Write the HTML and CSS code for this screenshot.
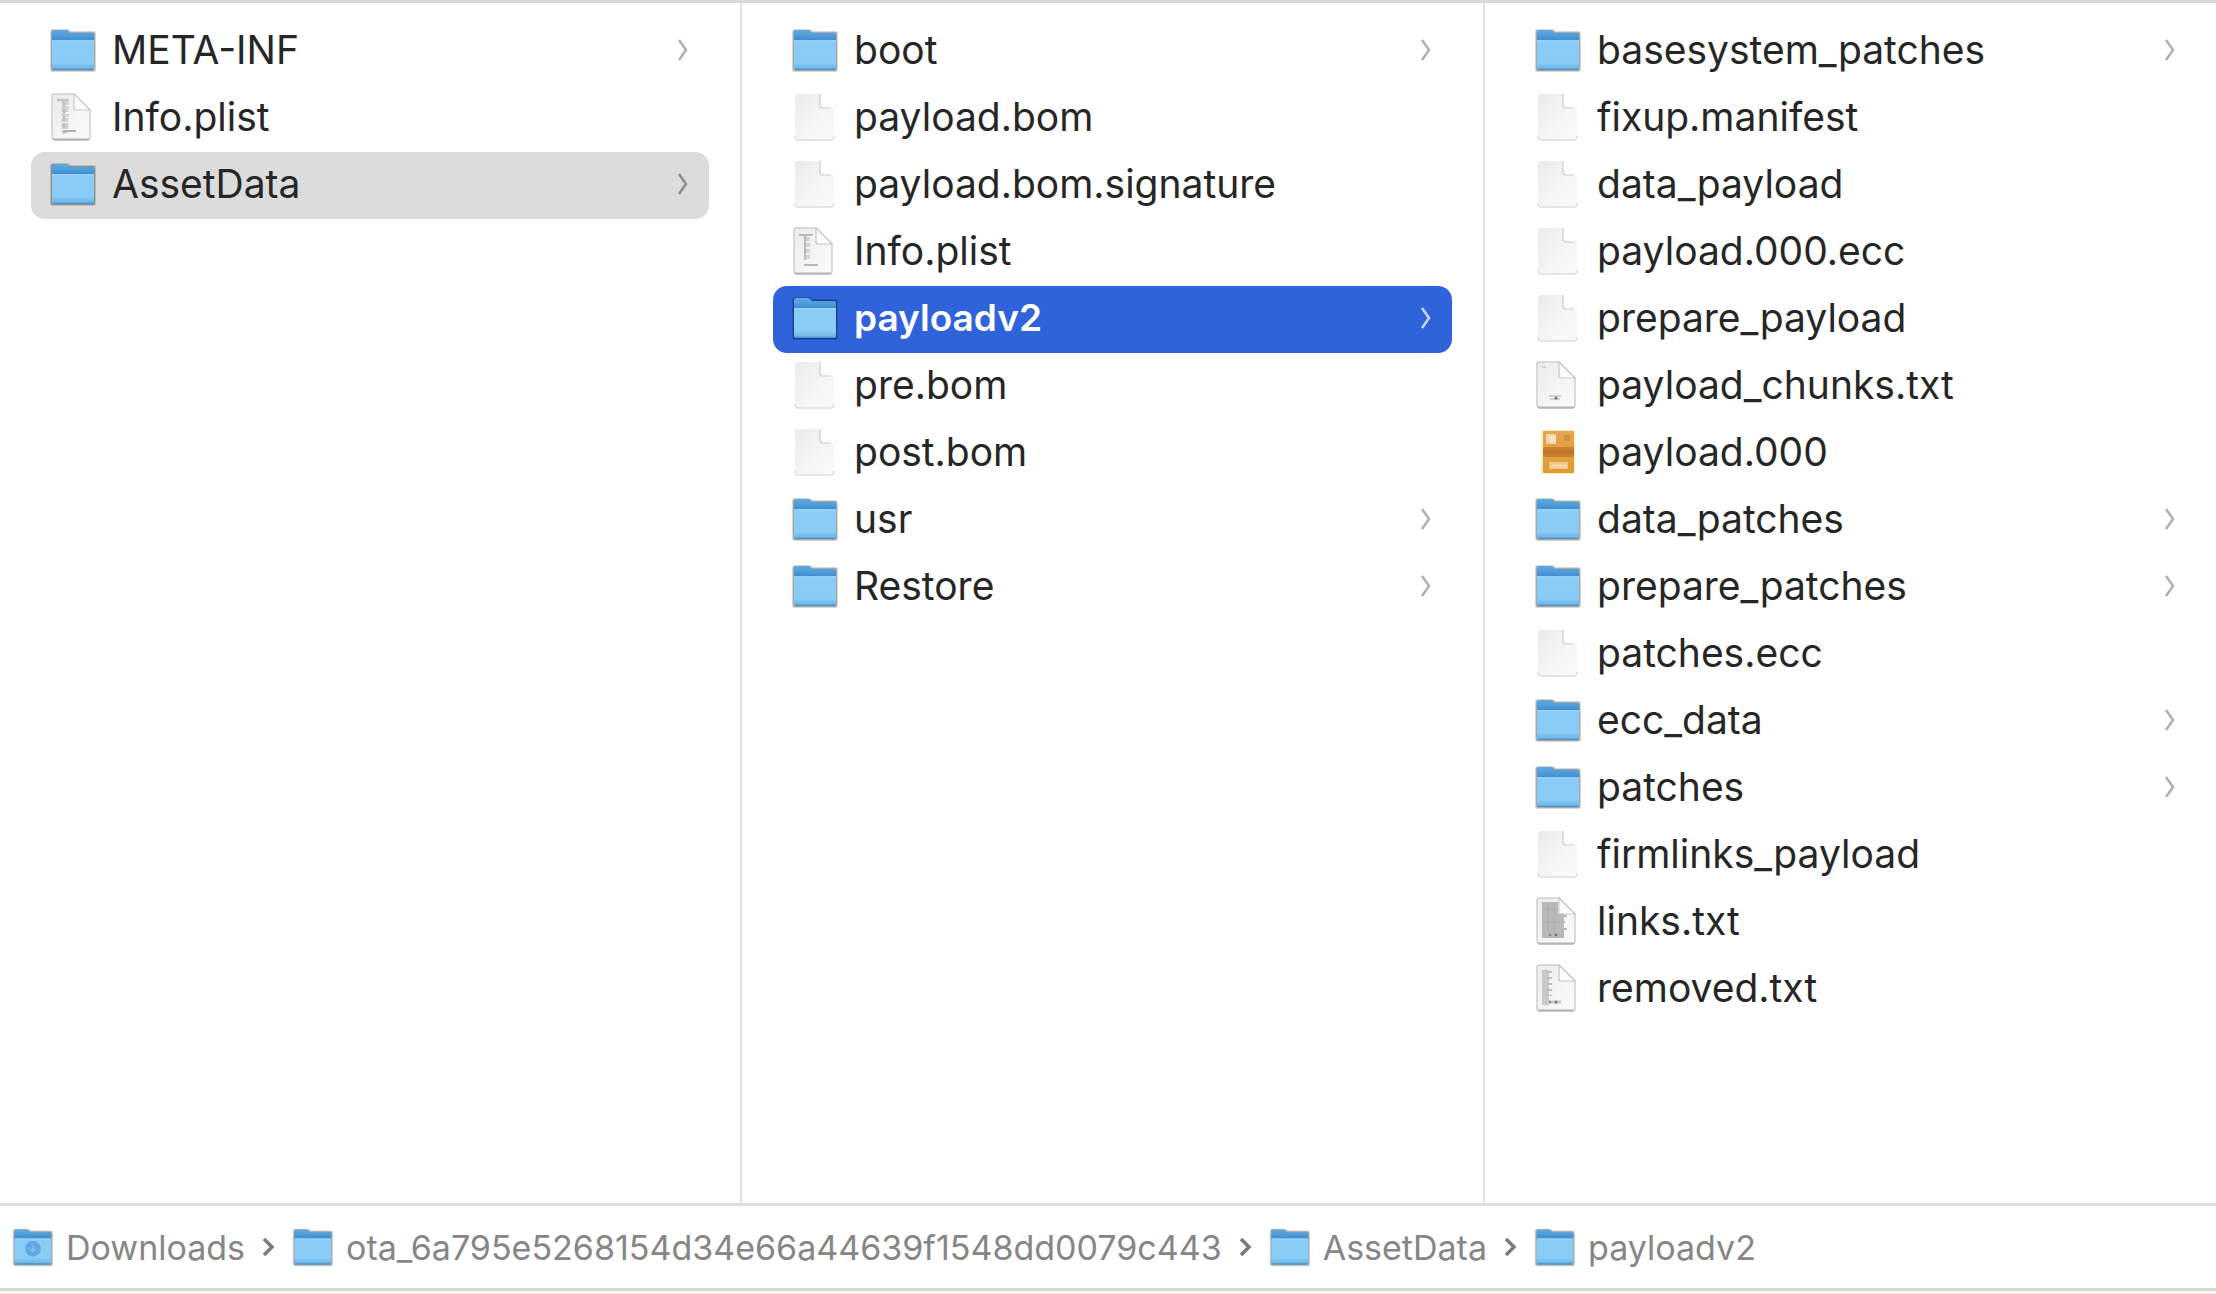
FILE: index.html
```html
<!DOCTYPE html>
<html lang="en">
<head>
<meta charset="utf-8">
<title>payloadv2</title>
<link rel="stylesheet" href="styles.css">
</head>
<body>
<svg class="sprite" aria-hidden="true">
  <defs>
    <linearGradient id="front" x1="0" y1="0" x2="0" y2="1">
      <stop offset="0" stop-color="#96d4f8"/><stop offset=".12" stop-color="#88cbf5"/><stop offset=".75" stop-color="#8accf6"/><stop offset="1" stop-color="#63b0e2"/>
    </linearGradient>
    <linearGradient id="back" x1="0" y1="0" x2="0" y2="1">
      <stop offset="0" stop-color="#5eaade"/><stop offset=".5" stop-color="#4c9ad8"/><stop offset="1" stop-color="#3a80cc"/>
    </linearGradient>
    <linearGradient id="sheet" x1="0" y1="0" x2="1" y2="1">
      <stop offset="0" stop-color="#ebebeb"/><stop offset=".6" stop-color="#f6f6f6"/><stop offset="1" stop-color="#fafafa"/>
    </linearGradient>
    <linearGradient id="box" x1="0" y1="0" x2="0" y2="1">
      <stop offset="0" stop-color="#e6a54f"/><stop offset="1" stop-color="#e19a35"/>
    </linearGradient>
    <symbol id="folder" viewBox="-1 1 48 48">
      <path d="M1 7Q1 4 4 4H18Q20 4 22 6H44Q47 6 47 9V44Q47 47 44 47H4Q1 47 1 44Z" fill="#000" opacity=".16"/>
      <path d="M2 7Q2 5 4 5H17Q19 5 21 7H44Q46 7 46 9V44Q46 46 44 46H4Q2 46 2 44Z" fill="#000" opacity=".22"/>
      <path d="M3 7Q3 5 5 5H17Q19 5 21 8H43Q45 8 45 10V18H3Z" fill="url(#back)"/>
      <path d="M3 15H45V43Q45 45 43 45H5Q3 45 3 43Z" fill="url(#front)"/>
      <path d="M4 44.300H44" stroke="#4a92c8" stroke-width="1.200"/>
    </symbol>
    <symbol id="downloads" viewBox="0 0 48 48">
      <use href="#folder" width="48" height="48"/>
      <circle cx="25" cy="26" r="9" fill="#5fa9e0"/>
      <path d="M25 22V29M22 26.500L25 29.500L28 26.500" fill="none" stroke="#79bdec" stroke-width="2"/>
    </symbol>
    <symbol id="doc" viewBox="0 0 48 48">
      <path d="M5 4Q5 1 8 1H30L44 15V44Q44 47 41 47H8Q5 47 5 44Z" fill="url(#sheet)"/>
      <path d="M5 43Q5 47 8 47H41Q44 47 44 43" fill="none" stroke="#dedede" stroke-width="1.500"/>
      <path d="M30 1L44 15H33Q30 15 30 12Z" fill="#fff"/>
      <path d="M30 1V12Q30 15 33 15H41" fill="none" stroke="#cbcbcb" stroke-width="1.200"/>
    </symbol>
    <symbol id="page" viewBox="0 0 48 48">
      <path d="M4 3Q4 1 6 1H26L42 17V44Q42 47 39 47H7Q4 47 4 44Z" fill="url(#sheet)" stroke="#cfcfcf" stroke-width="1.500"/>
      <path d="M5 46.500H41" stroke="#b4b4b4" stroke-width="2"/>
      <path d="M26 1L42 17H28Q26 17 26 15Z" fill="#fdfdfd" stroke="#c8c8c8" stroke-width="1.200"/>
    </symbol>
    <symbol id="plist-a" viewBox="0 0 48 48">
      <use href="#page" width="48" height="48"/>
      <path d="M9 7H21" stroke="#c4c4c4" stroke-width="2.500"/>
      <path d="M17 8V40" stroke="#d2d2d2" stroke-width="7" stroke-dasharray="4 1 6 2 3 1"/>
      <path d="M16 9V41" stroke="#bdbdbd" stroke-width="2" stroke-dasharray="5 2"/>
      <path d="M15 38H28" stroke="#b4b4b4" stroke-width="2"/>
    </symbol>
    <symbol id="plist-b" viewBox="0 0 48 48">
      <use href="#page" width="48" height="48"/>
      <path d="M9 8H23M15 8V33M14 38H28" fill="none" stroke="#bababa" stroke-width="2"/>
      <path d="M18 10V34" stroke="#d4d4d4" stroke-width="4" stroke-dasharray="4 2"/>
    </symbol>
    <symbol id="chunks" viewBox="0 0 48 48">
      <use href="#page" width="48" height="48"/>
      <path d="M9 6H13" stroke="#d4d4d4" stroke-width="2"/>
      <path d="M16 35H28M17 38H27" stroke="#d0d0d0" stroke-width="2"/>
      <circle cx="23" cy="37" r="1.500" fill="#6f6f6f"/>
    </symbol>
    <symbol id="links" viewBox="0 0 48 48">
      <use href="#page" width="48" height="48"/>
      <path d="M9 5H25V17H31V41H9Z" fill="#b9b9b9"/>
      <path d="M15 6V36M21 6V36M10 12H25M10 25H30" stroke="#adadad" stroke-width="1"/>
      <path d="M30 19H34M30 32H34M28 25H32" stroke="#bcbcbc" stroke-width="2"/>
      <circle cx="17" cy="38" r="1.200" fill="#888"/><circle cx="23" cy="38" r="1.500" fill="#777"/>
    </symbol>
    <symbol id="removed" viewBox="0 0 48 48">
      <use href="#page" width="48" height="48"/>
      <path d="M9 6H16V41H9Z" fill="#c9c9c9"/>
      <path d="M16 7V32" stroke="#c0c0c0" stroke-width="6" stroke-dasharray="2 4"/>
      <path d="M10 38H28" stroke="#cacaca" stroke-width="3"/>
      <circle cx="17" cy="38" r="1.200" fill="#888"/><circle cx="23" cy="38" r="1.500" fill="#777"/>
    </symbol>
    <symbol id="package" viewBox="0 0 48 48">
      <rect x="8" y="2" width="34" height="44" rx="2" fill="#fdf0b8"/>
      <rect x="10" y="3" width="31" height="42" rx="1" fill="url(#box)"/>
      <path d="M10 19H41V29H10Z" fill="#c9812f"/>
      <path d="M10 24H41" stroke="#be7528" stroke-width="4"/>
      <path d="M13 6H23V16H13Z" fill="#efd3a4"/><path d="M16 8H23V14H16Z" fill="#f2e4cb"/>
      <path d="M31 7H37V13H31Z" fill="#d1913f"/>
      <path d="M16 34H35V41H16Z" fill="#efc689"/>
      <path d="M18 38H34" stroke="#f4d8aa" stroke-width="3"/>
    </symbol>
    <symbol id="chevron" viewBox="0 0 12 24">
      <path d="M2 2L9 12L2 22" fill="none" stroke="currentColor" stroke-width="2.500"/>
    </symbol>
    <symbol id="step" viewBox="0 0 14 20">
      <path d="M3 2L11 10L3 18" fill="none" stroke="currentColor" stroke-width="3.500"/>
    </symbol>
  </defs>
</svg>

<main class="browser">
  <ul class="column">
    <li><a class="row" href="#"><svg class="icon"><use href="#folder"/></svg><span class="name">META-INF</span><svg class="chevron"><use href="#chevron"/></svg></a></li>
    <li><a class="row" href="#"><svg class="icon"><use href="#plist-a"/></svg><span class="name">Info.plist</span></a></li>
    <li><a class="row row-open" href="#"><svg class="icon"><use href="#folder"/></svg><span class="name">AssetData</span><svg class="chevron"><use href="#chevron"/></svg></a></li>
  </ul>
  <ul class="column">
    <li><a class="row" href="#"><svg class="icon"><use href="#folder"/></svg><span class="name">boot</span><svg class="chevron"><use href="#chevron"/></svg></a></li>
    <li><a class="row" href="#"><svg class="icon"><use href="#doc"/></svg><span class="name">payload.bom</span></a></li>
    <li><a class="row" href="#"><svg class="icon"><use href="#doc"/></svg><span class="name">payload.bom.signature</span></a></li>
    <li><a class="row" href="#"><svg class="icon"><use href="#plist-b"/></svg><span class="name">Info.plist</span></a></li>
    <li><a class="row row-selected" href="#" aria-current="true"><svg class="icon"><use href="#folder"/></svg><span class="name">payloadv2</span><svg class="chevron"><use href="#chevron"/></svg></a></li>
    <li><a class="row" href="#"><svg class="icon"><use href="#doc"/></svg><span class="name">pre.bom</span></a></li>
    <li><a class="row" href="#"><svg class="icon"><use href="#doc"/></svg><span class="name">post.bom</span></a></li>
    <li><a class="row" href="#"><svg class="icon"><use href="#folder"/></svg><span class="name">usr</span><svg class="chevron"><use href="#chevron"/></svg></a></li>
    <li><a class="row" href="#"><svg class="icon"><use href="#folder"/></svg><span class="name">Restore</span><svg class="chevron"><use href="#chevron"/></svg></a></li>
  </ul>
  <ul class="column column-last">
    <li><a class="row" href="#"><svg class="icon"><use href="#folder"/></svg><span class="name">basesystem_patches</span><svg class="chevron"><use href="#chevron"/></svg></a></li>
    <li><a class="row" href="#"><svg class="icon"><use href="#doc"/></svg><span class="name">fixup.manifest</span></a></li>
    <li><a class="row" href="#"><svg class="icon"><use href="#doc"/></svg><span class="name">data_payload</span></a></li>
    <li><a class="row" href="#"><svg class="icon"><use href="#doc"/></svg><span class="name">payload.000.ecc</span></a></li>
    <li><a class="row" href="#"><svg class="icon"><use href="#doc"/></svg><span class="name">prepare_payload</span></a></li>
    <li><a class="row" href="#"><svg class="icon"><use href="#chunks"/></svg><span class="name">payload_chunks.txt</span></a></li>
    <li><a class="row" href="#"><svg class="icon"><use href="#package"/></svg><span class="name">payload.000</span></a></li>
    <li><a class="row" href="#"><svg class="icon"><use href="#folder"/></svg><span class="name">data_patches</span><svg class="chevron"><use href="#chevron"/></svg></a></li>
    <li><a class="row" href="#"><svg class="icon"><use href="#folder"/></svg><span class="name">prepare_patches</span><svg class="chevron"><use href="#chevron"/></svg></a></li>
    <li><a class="row" href="#"><svg class="icon"><use href="#doc"/></svg><span class="name">patches.ecc</span></a></li>
    <li><a class="row" href="#"><svg class="icon"><use href="#folder"/></svg><span class="name">ecc_data</span><svg class="chevron"><use href="#chevron"/></svg></a></li>
    <li><a class="row" href="#"><svg class="icon"><use href="#folder"/></svg><span class="name">patches</span><svg class="chevron"><use href="#chevron"/></svg></a></li>
    <li><a class="row" href="#"><svg class="icon"><use href="#doc"/></svg><span class="name">firmlinks_payload</span></a></li>
    <li><a class="row" href="#"><svg class="icon"><use href="#links"/></svg><span class="name">links.txt</span></a></li>
    <li><a class="row" href="#"><svg class="icon"><use href="#removed"/></svg><span class="name">removed.txt</span></a></li>
  </ul>
</main>

<nav class="path" aria-label="Path">
  <a class="crumb" href="#"><svg class="crumb-icon"><use href="#downloads"/></svg>Downloads</a>
  <svg class="step"><use href="#step"/></svg>
  <a class="crumb" href="#"><svg class="crumb-icon"><use href="#folder"/></svg>ota_6a795e5268154d34e66a44639f1548dd0079c443</a>
  <svg class="step"><use href="#step"/></svg>
  <a class="crumb" href="#"><svg class="crumb-icon"><use href="#folder"/></svg>AssetData</a>
  <svg class="step"><use href="#step"/></svg>
  <a class="crumb" href="#"><svg class="crumb-icon"><use href="#folder"/></svg>payloadv2</a>
</nav>
</body>
</html>
```
FILE: styles.css
```css
* {
  box-sizing: border-box;
}

body {
  margin: 0;
  min-height: 100vh;
  display: flex;
  flex-direction: column;
  background: #fff;
  border-top: 3px solid #d9d9d9;
  border-bottom: 3px solid #fdf8f2;
  font-family: Inter, "Liberation Sans", sans-serif;
  color: #262626;
}

a {
  color: inherit;
  text-decoration: none;
}

svg {
  display: block;
  flex: none;
}

.sprite {
  position: absolute;
  width: 0;
  height: 0;
}

.browser {
  flex: 1;
  display: grid;
  grid-template-columns: 742fr 743fr 731fr;
}

.column {
  margin: 0;
  padding: 15px 31px;
  border-right: 2px solid #e2e2e2;
  list-style: none;
}

.column-last {
  padding-right: 20px;
  border-right: 0;
}

.row {
  display: flex;
  align-items: center;
  gap: 16px;
  height: 67px;
  padding: 0 20px 4px 17px;
  border-radius: 14px;
  font-size: 39px;
}

.row-open {
  background: #dcdcdc;
}

.row-selected {
  background: #2e63da;
  color: #fff;
  font-size: 37px;
  font-weight: 600;
}

.name {
  flex: 1;
  white-space: nowrap;
}

.icon {
  width: 48px;
  height: 48px;
}

.chevron {
  width: 12px;
  height: 24px;
  color: #b0b0b0;
}

.row-open .chevron {
  color: #8c8c8c;
}

.row-selected .chevron {
  color: #c9d7f7;
}

.path {
  display: flex;
  align-items: center;
  gap: 16px;
  height: 88px;
  padding: 0 11px;
  border-top: 3px solid #dedede;
  border-bottom: 3px solid #d8d8d0;
  font-size: 34px;
  color: #868686;
  white-space: nowrap;
}

.crumb {
  display: flex;
  align-items: center;
  gap: 13px;
}

.crumb-icon {
  width: 42px;
  height: 42px;
}

.step {
  width: 14px;
  height: 20px;
  color: #7a7a7a;
}
```
